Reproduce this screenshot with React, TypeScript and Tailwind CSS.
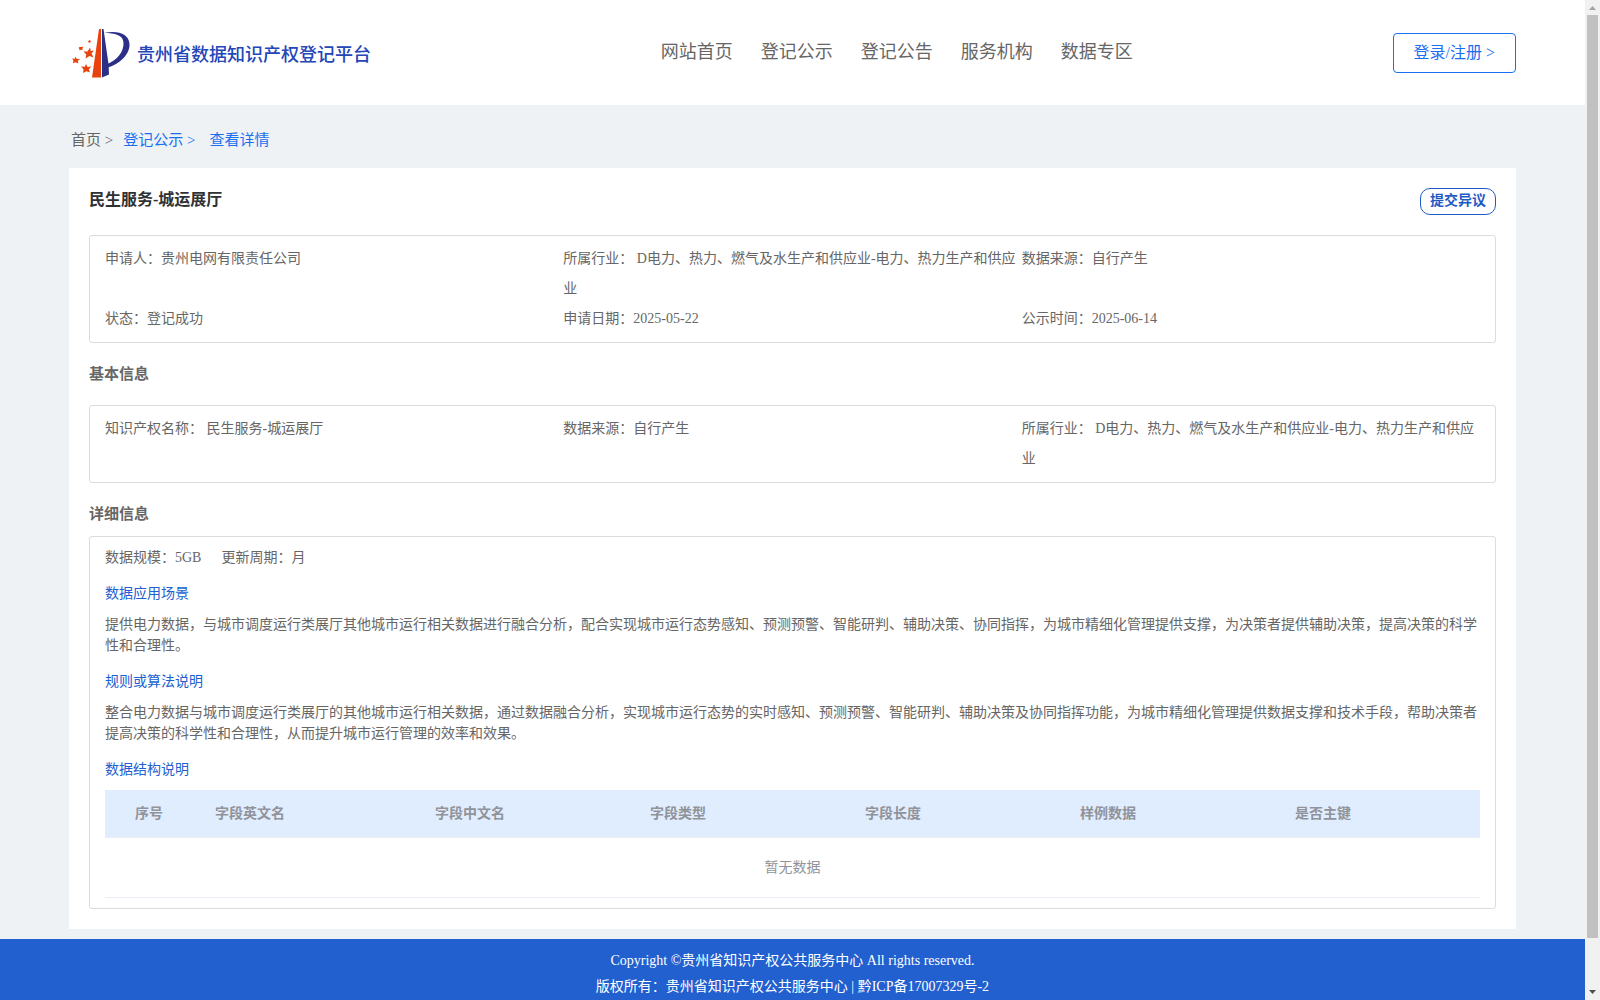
import type { ReactNode } from 'react'

const navItems = ['网站首页', '登记公示', '登记公告', '服务机构', '数据专区']

const industry = 'D电力、热力、燃气及水生产和供应业-电力、热力生产和供应业'

const summary = [
  '申请人：贵州电网有限责任公司',
  `所属行业： ${industry}`,
  '数据来源：自行产生',
  '状态：登记成功',
  '申请日期：2025-05-22',
  '公示时间：2025-06-14',
]

const basicInfo = ['知识产权名称： 民生服务-城运展厅', '数据来源：自行产生', `所属行业： ${industry}`]

const columns = [
  { title: '序号', className: 'w-[100px] pl-[30px]' },
  { title: '字段英文名', className: 'w-[220px] pl-[10px]' },
  { title: '字段中文名', className: 'w-[215px] pl-[10px]' },
  { title: '字段类型', className: 'w-[215px] pl-[10px]' },
  { title: '字段长度', className: 'w-[215px] pl-[10px]' },
  { title: '样例数据', className: 'w-[215px] pl-[10px]' },
  { title: '是否主键', className: 'pl-[10px]' },
]

function Logo() {
  return (
    <svg width="60" height="52" viewBox="0 0 60 52" aria-hidden="true">
      <path d="M27 1 L29 1 L29 49.500 L20 49.500 Z" fill="#e8430f" />
      <path d="M30 1 L31.500 1 L34.500 22 L36.500 36 L37 46.500 L30 49.500 Z" fill="#2b2f86" />
      <path
        d="M32 5 C46 2 57 6 57.500 16 C58 27 47 36 36 39.500 L35.500 36 C45 32 52 24 51.500 14.500 C51 7 43 5 32 5 Z"
        fill="#2b2f86"
      />
      <g fill="#e8430f">
        <path d="M18 19.500 L18.800 23 L22 22.500 L19.500 25.500 L21.500 29.500 L17.500 28 L13.500 30.500 L14.300 26.500 L11.500 23.500 L15.500 23.500 Z" />
        <path d="M14 36 L15.500 39 L19.500 38.500 L16.800 41.300 L18 44.500 L14.500 43.300 L11 45 L11.500 41.300 L9 38.500 L12.800 38.800 Z" />
        <path d="M3.500 28.500 L4.800 31 L8 31 L5.800 33 L6.300 35.500 L3.500 34.300 L0.800 35.300 L1.500 32.500 L0 30.500 L2.800 30.700 Z" />
        <path d="M7.500 19 L9.500 19 L11.500 18.500 L10.500 20.300 L10.500 22 L9 21.800 L7.500 22.500 L7.500 21 L6.500 20 Z" />
        <circle cx="17.500" cy="13.500" r="1.200" />
      </g>
    </svg>
  )
}

function InfoGrid({ items }: { items: string[] }) {
  return (
    <ul className="grid grid-cols-3 rounded-[3px] border border-[#dcdcdc] px-[15px] py-[8px] leading-[30px]">
      {items.map((item) => (
        <li key={item}>{item}</li>
      ))}
    </ul>
  )
}

function DetailBlock({ title, children }: { title: string; children: ReactNode }) {
  return (
    <section className="mt-[15px]">
      <h3 className="mb-[10px] leading-[21px] text-[#2060d0]">{title}</h3>
      {children}
    </section>
  )
}

function ScrollBar() {
  return (
    <div className="flex w-[15px] shrink-0 flex-col bg-[#f1f1f1]" aria-hidden="true">
      <svg width="15" height="15" viewBox="0 0 15 15">
        <path d="M4 10 L11 10 L7.500 6 Z" fill="#a3a3a3" />
      </svg>
      <div className="mx-[2px] grow bg-[#c1c1c1]" />
      <div className="flex h-[62px] items-end">
        <svg width="15" height="15" viewBox="0 0 15 15">
          <path d="M4 5 L11 5 L7.500 9 Z" fill="#505050" />
        </svg>
      </div>
    </div>
  )
}

export default function App() {
  return (
    <div className="flex h-screen overflow-hidden bg-[#eef2f5] font-['Liberation_Serif','Noto_Sans_CJK_SC',serif] text-[14px] text-[#666666]">
      <div className="min-w-0 grow overflow-hidden">
        <header className="flex h-[105px] items-center justify-between bg-white px-[69px]">
          <div className="flex w-[332px] items-center gap-[5px] pt-[2px] pl-[3px]">
            <Logo />
            <span className="pt-[3px] text-[18px] font-medium whitespace-nowrap text-[#2346b8]">
              贵州省数据知识产权登记平台
            </span>
          </div>
          <nav className="flex gap-[28px] pb-[2px] text-[18px] leading-[28px]">
            {navItems.map((item) => (
              <a key={item} href="#" className="whitespace-nowrap">
                {item}
              </a>
            ))}
          </nav>
          <button className="h-[40px] rounded-[4px] border border-[#1a6ff0] px-[20px] text-[16px] whitespace-nowrap text-[#1a6ff0]">
            登录/注册 &gt;
          </button>
        </header>

        <main className="px-[69px] pb-[10px]">
          <nav className="flex h-[63px] items-center gap-[10px] px-[2px] pt-[8px] text-[15px] text-[#1a6ff0]">
            <a href="#" className="text-[#666666]">
              首页 &gt;
            </a>
            <a href="#">登记公示 &gt;</a>
            <span className="pl-[4px]">查看详情</span>
          </nav>

          <div className="bg-white p-[20px]">
            <div className="flex h-[47px] items-start justify-between">
              <h1 className="text-[16px] leading-[24px] font-bold text-[#303133]">民生服务-城运展厅</h1>
              <button className="h-[27px] rounded-[10px] border border-[#1f5bc4] px-[9px] pb-[2px] text-[14px] font-bold text-[#1f5bc4]">
                提交异议
              </button>
            </div>
            <InfoGrid items={summary} />

            <h2 className="pt-[21px] pb-[21px] text-[15px] leading-[20px] font-bold">基本信息</h2>
            <InfoGrid items={basicInfo} />

            <h2 className="pt-[21px] pb-[12px] text-[15px] leading-[20px] font-bold">详细信息</h2>
            <div className="rounded-[3px] border border-[#dcdcdc] px-[15px] py-[10px] leading-[21px]">
              <div className="flex gap-[20px]">
                <span>数据规模：5GB</span>
                <span>更新周期：月</span>
              </div>
              <DetailBlock title="数据应用场景">
                <p>
                  提供电力数据，与城市调度运行类展厅其他城市运行相关数据进行融合分析，配合实现城市运行态势感知、预测预警、智能研判、辅助决策、协同指挥，为城市精细化管理提供支撑，为决策者提供辅助决策，提高决策的科学性和合理性。
                </p>
              </DetailBlock>
              <DetailBlock title="规则或算法说明">
                <p>
                  整合电力数据与城市调度运行类展厅的其他城市运行相关数据，通过数据融合分析，实现城市运行态势的实时感知、预测预警、智能研判、辅助决策及协同指挥功能，为城市精细化管理提供数据支撑和技术手段，帮助决策者提高决策的科学性和合理性，从而提升城市运行管理的效率和效果。
                </p>
              </DetailBlock>
              <DetailBlock title="数据结构说明">
                <table className="w-full table-fixed border-separate border-spacing-0 text-left text-[#909399]">
                  <thead>
                    <tr className="h-[48px] bg-[#e0edff]">
                      {columns.map((col) => (
                        <th key={col.title} className={`border-b border-[#ebeef5] font-bold ${col.className}`}>
                          {col.title}
                        </th>
                      ))}
                    </tr>
                  </thead>
                  <tbody>
                    <tr className="h-[60px]">
                      <td colSpan={7} className="border-b border-[#ebeef5] text-center">
                        暂无数据
                      </td>
                    </tr>
                  </tbody>
                </table>
              </DetailBlock>
            </div>
          </div>
        </main>

        <footer className="bg-[#2260d0] pt-[9px] pb-[20px] text-center leading-[26px] text-white">
          <p>Copyright ©贵州省知识产权公共服务中心 All rights reserved.</p>
          <p>
            版权所有：贵州省知识产权公共服务中心 |{' '}
            <a href="#">黔ICP备17007329号-2</a>
          </p>
        </footer>
      </div>
      <ScrollBar />
    </div>
  )
}
